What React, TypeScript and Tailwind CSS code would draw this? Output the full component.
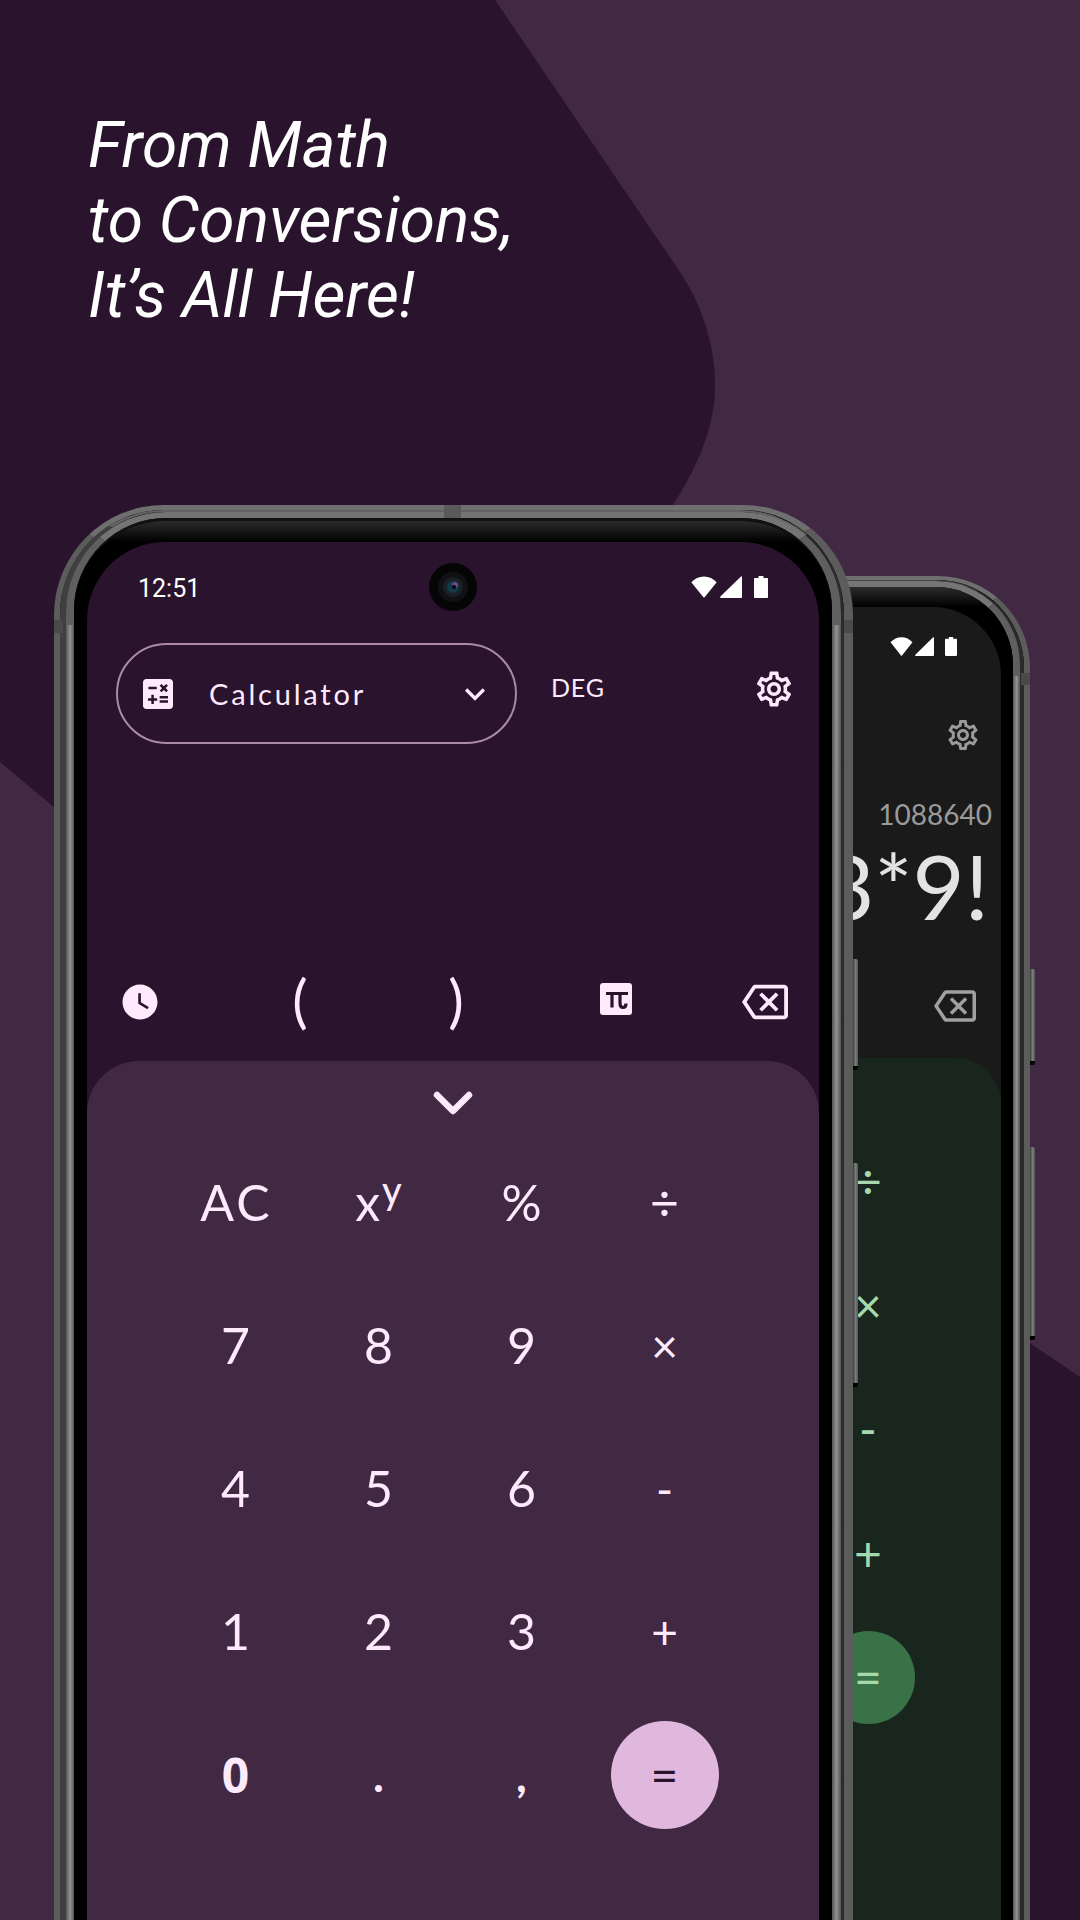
import React from "react";
import { MdCalculate, MdWatchLater, MdOutlineBackspace, MdOutlineSettings, MdKeyboardArrowDown } from "react-icons/md";

function Wifi({ className }: { className: string }) {
  return (
    <svg viewBox="0 0 26 22" className={className} fill="currentColor">
      <path d="M0.3 6.2C3.6 2.6 8 0.4 13 0.4s9.400 2.200 12.700 5.800L13.600 21.300c-.3.400-.9.400-1.200 0Z" />
    </svg>
  );
}
function Signal({ className }: { className: string }) {
  return (
    <svg viewBox="0 0 22 22" className={className} fill="currentColor">
      <path d="M21 .4c.4-.3 1-.1 1 .5V21c0 .5-.4 1-1 1H1c-.8 0-1.200-.9-.6-1.400Z" />
    </svg>
  );
}
function Battery({ className }: { className: string }) {
  return (
    <svg viewBox="0 0 14 22" className={className} fill="currentColor">
      <path d="M4.500 0h5v2H13c.6 0 1 .4 1 1v18c0 .6-.4 1-1 1H1c-.6 0-1-.4-1-1V3c0-.6.4-1 1-1h3.500Z" />
    </svg>
  );
}
function PiIcon() {
  return (
    <svg viewBox="0 0 32 32" className="w-[32px] h-[32px]">
      <rect width="32" height="32" rx="3" fill="#fdeafc" />
      <path d="M6 10.500H28M12 10.500V24.500M20 10.500V20c0 3.500 1 4.500 3 4.500s3-1 3-4" fill="none" stroke="#2a132c" strokeWidth="3.200" />
    </svg>
  );
}
function Camera() {
  return (
    <svg viewBox="0 0 48 48" className="absolute left-[342px] top-[21px] w-[48px] h-[48px]">
      <circle cx="24" cy="24" r="24" fill="#050505" />
      <circle cx="24" cy="24" r="15" fill="#101114" />
      <circle cx="24" cy="24" r="10" fill="#1a2026" />
      <circle cx="24" cy="24" r="6" fill="#0f3a4a" />
      <circle cx="26" cy="22" r="3" fill="#6a4a8a" />
      <circle cx="25" cy="24" r="2" fill="#04060a" />
    </svg>
  );
}

function Key({ children, className = "" }: { children: React.ReactNode; className?: string }) {
  return <div className={"flex items-center justify-center " + className}>{children}</div>;
}

function Button({ className }: { className: string }) {
  return (
    <div className={"absolute w-[5px] rounded-r-[2px] bg-[linear-gradient(to_right,#3c3c3c,#7c7c7c_50%,#555)] border-b-[4px] border-b-black " + className} />
  );
}

function Strip({ className }: { className: string }) {
  return <div className={"absolute bottom-0 bg-[linear-gradient(to_right,#555,#929292_50%,#555)] " + className} />;
}

function MainPhone() {
  const text = "[font-family:Lato,'Noto_Sans',sans-serif]";
  return (
    <div className="absolute left-[54px] top-[505px] w-[799px] h-[1500px] z-20">
      <div className="h-full rounded-t-[110px] border-l-[6px] border-r-[9px] border-t-[5px] border-l-[#5c5c5c] border-r-[#5c5c5c] border-t-[#6f6f6f] bg-black">
        <div className="h-full rounded-t-[104px] border-l-[6px] border-r-[3px] border-t-[2px] border-l-[#3f3f3f] border-r-[#2b2b2b] border-t-[#636363]">
          <div className="h-full rounded-t-[100px] border-l-[8px] border-r-[9px] border-t-[6px] border-b-0 border-l-[#5f5f5f] border-r-[#5f5f5f] border-t-[#747474]">
            <div className="h-full rounded-t-[92px] border-t-[3px] border-t-[#111] pl-[13px] pr-[13px] pt-[21px] bg-[linear-gradient(to_bottom,#2c2c2c,#000_21px)]">
              <div className="relative h-full rounded-t-[78px] bg-[#2a132c] overflow-hidden flex flex-col">
                <Camera />
                <div className="h-[90px] shrink-0 flex items-start justify-between pl-[51px] pr-[51px] pt-[30px] text-white">
                  <span className="mt-[2px] text-[25px] leading-[30px] [font-family:Roboto,sans-serif]">12:51</span>
                  <div className="flex items-center pt-[4px]">
                    <Wifi className="w-[26px] h-[22px]" />
                    <Signal className="w-[22px] h-[22px] ml-[3px]" />
                    <Battery className="w-[14px] h-[22px] ml-[12px]" />
                  </div>
                </div>
                <div className="mt-[11px] h-[101px] shrink-0 flex items-center pl-[29px]">
                  <div className="w-[401px] h-[101px] rounded-full border-2 border-[#a98ba9] flex items-center pl-[20px] text-[#fdeafc]">
                    <MdCalculate className="w-[40px] h-[40px] shrink-0" />
                    <span className={"ml-[31px] text-[29px] tracking-[2.800px] " + text}>Calculator</span>
                    <MdKeyboardArrowDown className="ml-auto mr-[20px] w-[40px] h-[40px]" />
                  </div>
                  <span className={"ml-[34px] -mt-[12px] text-[25px] tracking-[0.800px] text-[#fdeafc] " + text}>DEG</span>
                  <MdOutlineSettings className="ml-[148px] -mt-[10px] w-[42px] h-[42px] text-[#fdeafc]" />
                </div>
                <div className="h-[222px] shrink-0" />
                <div className={"h-[72px] shrink-0 flex items-center text-[#fdeafc] " + text}>
                  <MdWatchLater className="ml-[32px] w-[42px] h-[42px] -mt-[1px]" />
                  <span className="ml-[118px] -mt-[6px] w-[42px] text-center text-[58px]">(</span>
                  <span className="ml-[114px] -mt-[6px] w-[42px] text-center text-[58px]">)</span>
                  <div className="ml-[123px] -mt-[7px]"><PiIcon /></div>
                  <MdOutlineBackspace className="ml-[110px] w-[46px] h-[46px]" />
                </div>
                <div className="mt-[23px] flex-1 bg-[#412843] rounded-t-[52px] flex flex-col">
                  <div className="h-[70px] flex justify-center items-start pt-[30px]">
                    <svg viewBox="0 0 40 24" className="w-[40px] h-[24px]">
                      <path d="M4 4L20 20L36 4" fill="none" stroke="#fdeafc" strokeWidth="6.500" strokeLinecap="round" strokeLinejoin="round" />
                    </svg>
                  </div>
                  <div className={"ml-[77px] grid grid-cols-[repeat(4,143px)] auto-rows-[143px] text-[50px] text-[#fdeafc] " + text}>
                    <Key className="tracking-[3px] pl-[2px]">AC</Key>
                    <Key><span>x<sup className="top-0 ml-[2px] text-[38px] font-medium align-[17px] leading-none">y</sup></span></Key>
                    <Key>%</Key>
                    <Key className="text-[50px]">÷</Key>
                    <Key>7</Key>
                    <Key>8</Key>
                    <Key>9</Key>
                    <Key className="text-[46px]">×</Key>
                    <Key>4</Key>
                    <Key>5</Key>
                    <Key>6</Key>
                    <Key className="text-[46px]">-</Key>
                    <Key>1</Key>
                    <Key>2</Key>
                    <Key>3</Key>
                    <Key className="text-[46px]">+</Key>
                    <Key className="font-bold text-[48px] [font-family:'Open_Sans',sans-serif]">0</Key>
                    <Key className="font-bold text-[46px]">.</Key>
                    <Key className="font-bold text-[46px]">,</Key>
                    <Key>
                      <div className="w-[108px] h-[108px] rounded-full bg-[#e0b8de] flex items-center justify-center text-[#2a132c] text-[48px]">=</div>
                    </Key>
                  </div>
                </div>
              </div>
            </div>
          </div>
        </div>
      </div>
      <Strip className="left-[12px] top-[120px] w-[8px]" />
      <Strip className="right-[12px] top-[120px] w-[9px]" />
      <div className="absolute left-[390px] top-0 w-[17px] h-[13px] bg-[#5a5a5a]" />
      <div className="absolute left-0 top-[115px] w-[9px] h-[13px] bg-[#4a4a4a]" />
      <div className="absolute right-0 top-[115px] w-[9px] h-[13px] bg-[#4a4a4a]" />
      <Button className="left-[799px] top-[454px] h-[111px]" />
      <Button className="left-[799px] top-[658px] h-[224px]" />
    </div>
  );
}

function BackPhone() {
  const text = "[font-family:Lato,'Noto_Sans',sans-serif]";
  const green = "text-[#a6d8ae] text-[48px] " + text;
  return (
    <div className="absolute left-[500px] top-[576px] w-[530px] h-[1500px] z-10">
      <div className="h-full rounded-t-[92px] border-r-[6px] border-t-[4px] border-r-[#5c5c5c] border-t-[#6f6f6f] bg-black">
        <div className="h-full rounded-t-[88px] border-r-[4px] border-t-[1px] border-r-[#2b2b2b] border-t-[#444]">
          <div className="h-full rounded-t-[84px] border-r-[7px] border-t-[6px] border-r-[#5f5f5f] border-t-[#757575]">
            <div className="h-full rounded-t-[78px] pr-[12px] pt-[20px] bg-[linear-gradient(to_bottom,#2c2c2c,#000_20px)]">
              <div className="h-full rounded-tr-[68px] bg-[#1a1a1a] overflow-hidden flex flex-col items-end">
                <div className="h-[78px] shrink-0 w-full flex justify-end items-start pt-[30px] pr-[44px] text-white">
                  <Wifi className="w-[23px] h-[19px]" />
                  <Signal className="w-[19px] h-[19px] ml-[2px]" />
                  <Battery className="w-[12px] h-[19px] ml-[11px]" />
                </div>
                <MdOutlineSettings className="mt-[32px] mr-[20px] w-[36px] h-[36px] text-[#9a9a9a]" />
                <div className={"mt-[44px] mr-[9px] text-[28px] leading-[35px] text-[#9a9a9a] " + text}>1088640</div>
                <div className={"mt-[3px] mr-[12px] text-[90px] leading-[100px] text-[#e3e3e3] " + text}>3*9!</div>
                <MdOutlineBackspace className="mt-[50px] mr-[25px] w-[42px] h-[42px] text-[#a0a0a0]" />
                <div className="mt-[31px] flex-1 w-full bg-[#19261d] rounded-tr-[46px] pt-[61px] pr-[71px] flex flex-col items-end">
                  <Key className={"w-[124px] h-[124px] " + green}>÷</Key>
                  <Key className={"w-[124px] h-[124px] " + green}>×</Key>
                  <Key className={"w-[124px] h-[124px] " + green}>-</Key>
                  <Key className={"w-[124px] h-[124px] " + green}>+</Key>
                  <Key className={"w-[124px] h-[124px] " + green}>
                    <div className="w-[93px] h-[93px] rounded-full bg-[#3a7248] flex items-center justify-center">=</div>
                  </Key>
                </div>
              </div>
            </div>
          </div>
        </div>
      </div>
      <Strip className="right-[10px] top-[100px] w-[7px]" />
      <div className="absolute right-0 top-[97px] w-[9px] h-[12px] bg-[#4a4a4a]" />
      <Button className="left-[530px] top-[393px] h-[96px]" />
      <Button className="left-[530px] top-[571px] h-[193px]" />
    </div>
  );
}

export default function App() {
  return (
    <div className="relative w-[1080px] h-[1920px] overflow-hidden bg-[#412843]">
      <svg viewBox="0 0 1080 1920" className="absolute inset-0 w-[1080px] h-[1920px]">
        <path
          d="M0 0H495L680 272C705 310 715 350 715 386C715 430 695 470 673 505L400 900L55 808L0 762Z"
          fill="#2a132c"
        />
        <path d="M1000 1323L1080 1377V1920H900Z" fill="#2a132c" />
      </svg>
      <h1 className="relative pl-[88px] pt-[108px] text-[64px] leading-[75px] italic font-normal text-white [font-family:Roboto,sans-serif]">
        From Math
        <br />
        to Conversions,
        <br />
        It’s All Here!
      </h1>
      <BackPhone />
      <MainPhone />
    </div>
  );
}
